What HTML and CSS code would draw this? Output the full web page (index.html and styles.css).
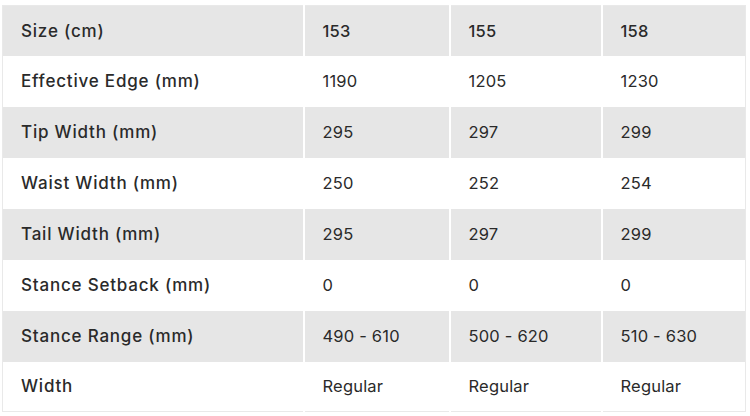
FILE: index.html
```html
<!DOCTYPE html>
<html>
<head>
<meta charset="utf-8">
<link rel="stylesheet" href="styles.css">
</head>
<body>
<div class="wrap">
<table class="specs">
  <colgroup>
    <col class="c1"><col class="c2"><col class="c3"><col class="c4">
  </colgroup>
  <tbody>
    <tr class="shade"><th>Size (cm)</th><td class="num">153</td><td class="num">155</td><td class="num">158</td></tr>
    <tr><th>Effective Edge (mm)</th><td>1190</td><td>1205</td><td>1230</td></tr>
    <tr class="shade"><th>Tip Width (mm)</th><td>295</td><td>297</td><td>299</td></tr>
    <tr><th>Waist Width (mm)</th><td>250</td><td>252</td><td>254</td></tr>
    <tr class="shade"><th>Tail Width (mm)</th><td>295</td><td>297</td><td>299</td></tr>
    <tr><th>Stance Setback (mm)</th><td>0</td><td>0</td><td>0</td></tr>
    <tr class="shade"><th>Stance Range (mm)</th><td>490 - 610</td><td>500 - 620</td><td>510 - 630</td></tr>
    <tr><th>Width</th><td>Regular</td><td>Regular</td><td>Regular</td></tr>
  </tbody>
</table>
</div>
</body>
</html>
```

FILE: styles.css
```css
html, body { margin: 0; padding: 0; background: #fff; }
.wrap { padding: 5px 5px 0 2px; }
.specs {
  width: 743px;
  border-collapse: collapse;
  border: 1px solid #e9e9e9;
  font-family: "Inter", "Open Sans", sans-serif;
  font-size: 16.5px;
  color: #2a2a2a;
  table-layout: fixed;
}
.c1 { width: 301px; }
.c2 { width: 146px; }
.c3 { width: 152px; }
.c4 { width: 144px; }
.specs th, .specs td {
  height: 51px;
  padding: 0 0 0 18px;
  text-align: left;
  vertical-align: middle;
  border-right: 2px solid #fff;
  box-sizing: border-box;
}
.specs tr:first-child > *, .specs tr:last-child > * { height: 50px; }
.specs tr > :last-child { border-right: 0; }
.specs th { font-weight: 500; font-size: 17px; letter-spacing: 0.8px; }
.specs td { font-weight: 400; letter-spacing: 0.2px; }
.specs td.num { font-weight: 500; }
.shade { background: #e6e6e6; }
```
